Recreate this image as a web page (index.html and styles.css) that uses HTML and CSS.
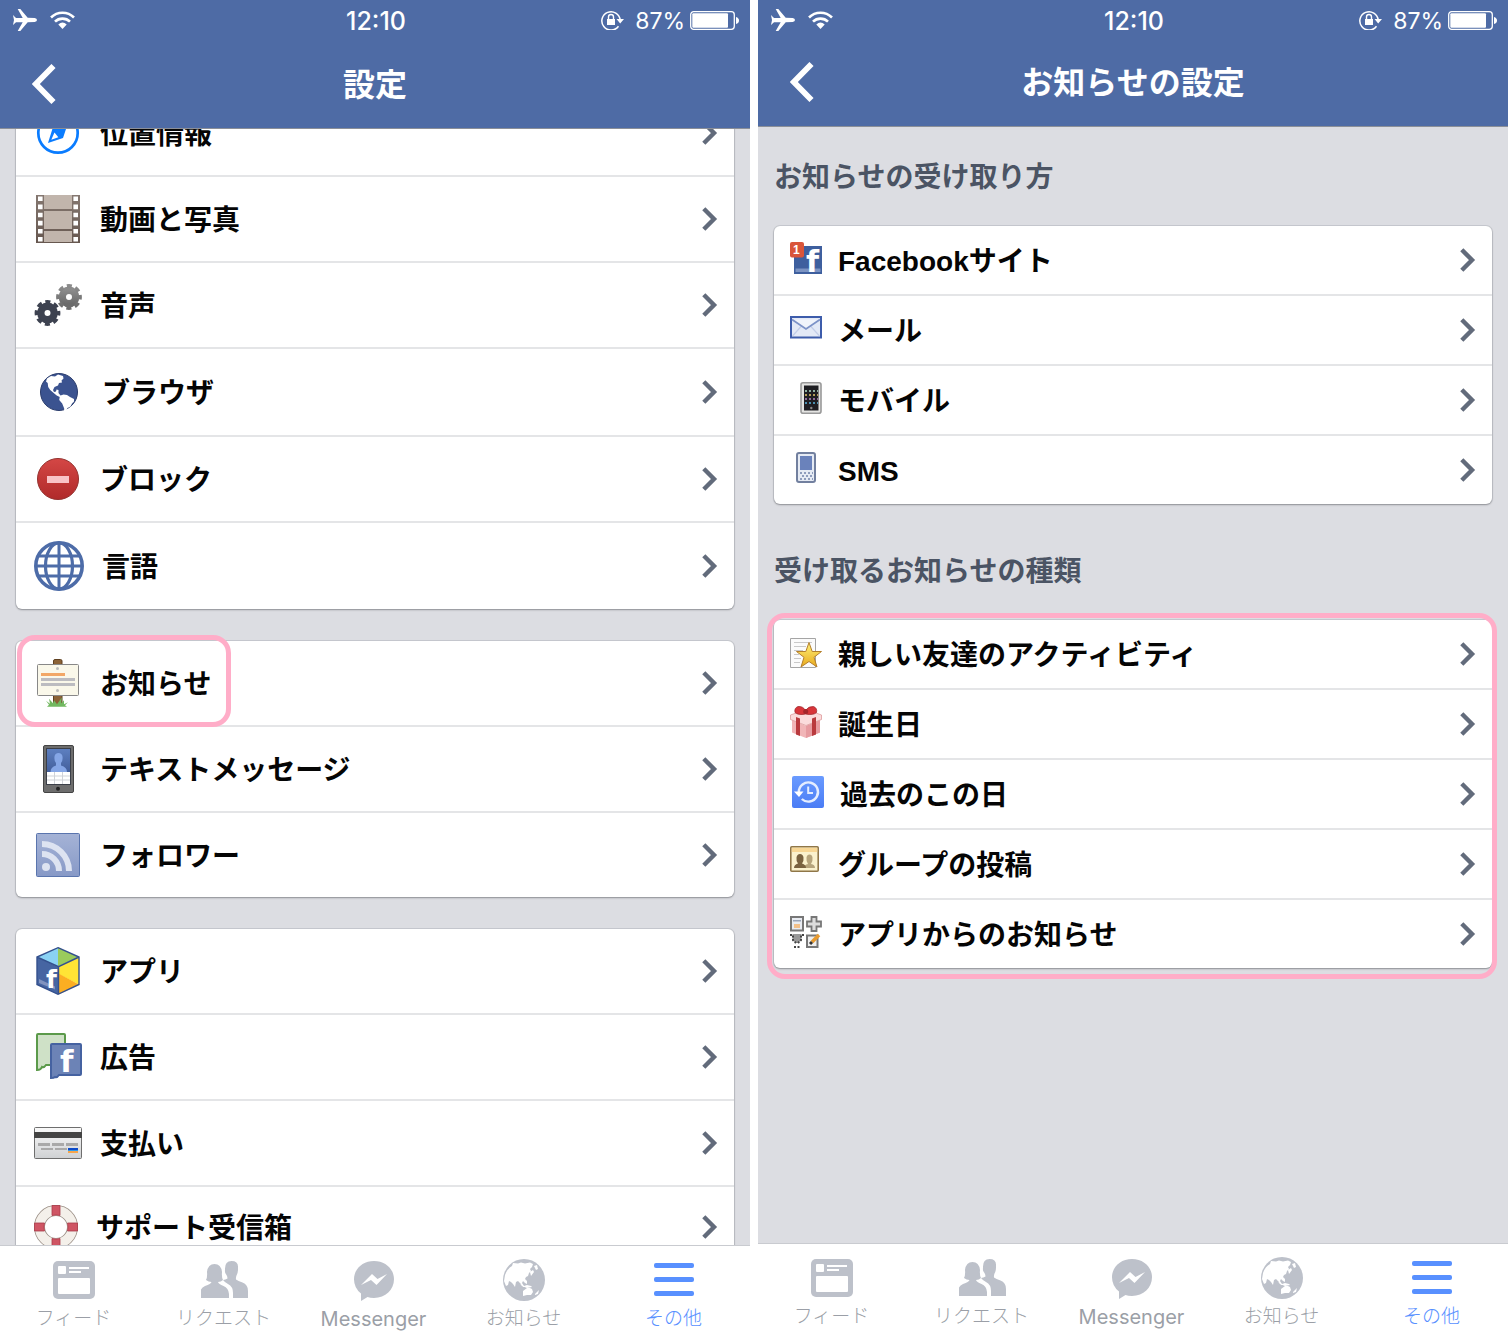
FILE: index.html
```html
<!DOCTYPE html>
<html lang="ja">
<head>
<meta charset="utf-8">
<title>お知らせの設定</title>
<meta name="viewport" content="width=device-width, initial-scale=1">
<link rel="stylesheet" href="styles.css">
</head>
<body>
<svg class="sprite" aria-hidden="true">
  <defs>
    <linearGradient id="g-film" x1="0" y1="0" x2="0" y2="1"><stop offset="0" stop-color="#857871"/><stop offset="1" stop-color="#66574f"/></linearGradient>
    <linearGradient id="g-gear" x1="0" y1="0" x2="0" y2="1"><stop offset="0" stop-color="#8b8b8b"/><stop offset="1" stop-color="#6b6b6b"/></linearGradient>
    <linearGradient id="g-red" x1="0" y1="0" x2="0" y2="1"><stop offset="0" stop-color="#d44745"/><stop offset="1" stop-color="#b02a2a"/></linearGradient>
    <linearGradient id="g-rss" x1="0" y1="0" x2="0" y2="1"><stop offset="0" stop-color="#a5b3d6"/><stop offset="1" stop-color="#8799c7"/></linearGradient>
    <linearGradient id="g-card" x1="0" y1="0" x2="0" y2="1"><stop offset="0" stop-color="#fafafa"/><stop offset="1" stop-color="#cfd1d3"/></linearGradient>
    <linearGradient id="g-sky" x1="0" y1="0" x2="0" y2="1"><stop offset="0" stop-color="#5d7fc0"/><stop offset="1" stop-color="#435f9b"/></linearGradient>
    <linearGradient id="g-star" x1="0" y1="0" x2="0" y2="1"><stop offset="0" stop-color="#fff27a"/><stop offset="1" stop-color="#e8a91c"/></linearGradient>
    <linearGradient id="g-day" x1="0" y1="0" x2="0" y2="1"><stop offset="0" stop-color="#6a9bff"/><stop offset="1" stop-color="#4a7cf5"/></linearGradient>
  </defs>

  <symbol id="plane" viewBox="0 0 24 22"><path fill="#fff" d="M0 6l3 3h6.700L4.700 0h2.600l7.400 8.700 7 .3Q24 9.400 24 11t-2.300 2l-7 .3L7.300 22H4.700l5-8.700H3L0 16l1-5z"/></symbol>
  <symbol id="wifi" viewBox="0 0 25 18"><g fill="none" stroke="#fff" stroke-width="2.600"><path d="M1 6.500a16.300 16.300 0 0 1 23 0"/><path d="M5 10.700a10.600 10.600 0 0 1 15 0"/></g><path fill="#fff" d="M12.500 18l-4.200-4.600q4.200-3.600 8.400 0z"/></symbol>
  <symbol id="lock" viewBox="0 0 24 20"><path fill="none" stroke="#fff" stroke-width="1.500" d="M18.500 16.300A9.200 9.200 0 1 1 20.200 10"/><path fill="#fff" d="M16.500 9H24l-3.800 4.600zM7 9h8v6H7z"/><path fill="none" stroke="#fff" stroke-width="1.400" d="M8.500 9V7a2.500 2.500 0 0 1 5 0v2"/></symbol>
  <symbol id="battery" viewBox="0 0 49 19"><rect x=".7" y=".7" width="43.600" height="17.600" rx="3" fill="none" stroke="#fff" stroke-width="1.300"/><rect x="2.300" y="2.300" width="35.700" height="14.400" rx="1" fill="#fff"/><path fill="#fff" d="M46 6q3 1 3 3.500T46 13z"/></symbol>
  <symbol id="back" viewBox="0 0 24 40"><path fill="none" stroke="#fff" stroke-width="5.800" d="M21.500 2L3.800 20l17.700 18"/></symbol>
  <symbol id="chev" viewBox="0 0 16 24"><path fill="none" stroke="#626b7b" stroke-width="4.400" d="M1.800 1.800L12 12 1.800 22.200"/></symbol>

  <symbol id="compass" viewBox="0 0 48 48"><circle cx="24" cy="24" r="19.700" fill="#fff" stroke="#0a7cff" stroke-width="2.700"/><path fill="#0a7cff" d="M14 34l5-16L34 14l-5 15z"/><path fill="#fff" d="M17.300 30.700l3.200-7.200 3.800 4.700z"/></symbol>
  <symbol id="film" viewBox="0 0 48 48"><path fill="url(#g-film)" d="M2 0h44v48H2z"/><path fill="#c1b5ac" d="M10 0h28v14H10zM10 16h28v18H10zM10 36h28v11H10z"/><path fill="none" stroke="#fff" stroke-width="4.600" stroke-dasharray="4.600 3.500" d="M6.300 1.500v46M41.700 1.500v46"/></symbol>
  <symbol id="gears" viewBox="0 0 48 48"><g fill="none" stroke="url(#g-gear)"><circle cx="35" cy="16" r="6.700" stroke-width="7.400"/><circle cx="35" cy="16" r="11" stroke-width="3.800" stroke-dasharray="5 3.640" stroke-dashoffset="2.500"/></g><g fill="none" stroke="#3d4250"><circle cx="13.500" cy="32" r="6.700" stroke-width="7.400"/><circle cx="13.500" cy="32" r="11" stroke-width="3.800" stroke-dasharray="5 3.640" stroke-dashoffset="2.500"/></g></symbol>
  <symbol id="globe" viewBox="0 0 50 48"><circle cx="25" cy="24" r="18.500" fill="#3b5390" stroke="#2a3c6c"/><path fill="#fff" d="M12 13.500l1-3 4-2.500 4 .5 3-2 5 1.500.5 2.500-2 2 .5 2-3 .5-1 2.500-3.500 1.500-1.500 3 1 2 2-.5.500-2 2 .5v3l2 2.500 3-1 3.500.5 3 2 4 2v2.500l-2 2-1.500 3-3 1.500-1.500 3-2 1.500.2-4-2-5-3-3.500.5-3-3-1.500-3-2.500-3.500-3-2-3-.5-4z"/></symbol>
  <symbol id="block" viewBox="0 0 48 48"><circle cx="24" cy="24" r="20.500" fill="url(#g-red)" stroke="#94322f"/><path fill="#f9c3c6" d="M13 21h22v7H13z"/></symbol>
  <symbol id="lang" viewBox="0 0 50 50"><g fill="none" stroke="#4d6ca8" stroke-width="3.200"><circle cx="25" cy="25" r="23.200" stroke-width="3.600"/><ellipse cx="25" cy="25" rx="13.500" ry="23"/><path d="M25 2v46M2 25h46M5 15h40M5 35h40" stroke-width="3"/></g></symbol>
  <symbol id="sign" viewBox="0 0 48 48"><path fill="#8b6237" stroke="#5f4020" d="M19.500 2q0-1.500 1.500-1.500h5.500q1.500 0 1.500 1.500v44h-8.500z"/><path fill="#72b860" d="M24 47.700H13l2-2-3-4 4 3-1-5 4 4.500 1-3 3 4 5-7-1 6 3-3v4l4-2-3 3 2 1.500z"/><rect x="3.500" y="5.500" width="41" height="31" rx="1" fill="#faf8ea" stroke="#888"/><path fill="#f2a766" d="M7 14h24v3H7z"/><path fill="#bcbcc0" d="M7 19h34v3H7zM7 24h34v3H7z"/><circle cx="23.500" cy="9.500" r="1.500" fill="#bbb"/><circle cx="23.500" cy="31.500" r="1.500" fill="#bbb"/></symbol>
  <symbol id="phone" viewBox="0 0 48 48"><rect x="9.500" y=".5" width="30" height="47" rx="1.500" fill="#6d6d6d" stroke="#444"/><path fill="#3b3f48" d="M12 3h25v37H12z"/><path fill="url(#g-sky)" d="M13 4h23v23H13z"/><path fill="#85a6e6" d="M16.500 27q0-5 5.500-6.500V18q-2-2-1.500-6.500Q21 8 24.500 8t4 3.500q.5 4.500-1.500 6.500v2.500q6 1.500 6 6.500z"/><path fill="#fff" d="M13 27h23v12H13z"/><path stroke="#d0d3d8" d="M13 31h23M13 35h23M20.500 27v12M28.500 27v12"/><circle cx="24" cy="43.700" r="2" fill="#222"/></symbol>
  <symbol id="rss" viewBox="0 0 48 48"><rect x="2.500" y="2.500" width="43" height="43" rx="1" fill="url(#g-rss)" stroke="#5a75ae"/><circle cx="12" cy="36" r="4" fill="#dde3f1"/><path fill="none" stroke="#dde3f1" stroke-width="6" d="M8 13a27 27 0 0 1 27 27M8 23a17 17 0 0 1 17 17"/></symbol>
  <symbol id="card" viewBox="0 0 48 48"><rect x=".5" y="8.500" width="47" height="31" rx="1" fill="url(#g-card)" stroke="#6e6e6e"/><path fill="#444" d="M0 13h48v6H0z"/><path fill="#a9a9a9" d="M4 24h12v3H4zM18 24h12v3H18zM32 24h12v3H32zM7 29h12v2H7zM21 29h12v2H21z"/><path fill="#0a49c8" d="M34 29h10v2H34z"/><path fill="#2f9cf0" d="M34 31h10v1H34z"/><path fill="#f7a54b" d="M34 32h10v2H34z"/></symbol>
  <symbol id="ring" viewBox="0 0 44 44"><circle cx="22" cy="22" r="16.500" fill="none" stroke="#9b8f86" stroke-width="11"/><circle cx="22" cy="22" r="16.500" fill="none" stroke="#f4f0ea" stroke-width="9.400"/><path fill="#cf5564" stroke="#a83b49" stroke-width=".8" d="M18 .5h8v10q-4-1-8 0zM18 33.500q4 1 8 0v10h-8zM.5 18h10q-1 4 0 8H.5zM33.500 18h10v8h-10q1-4 0-8z"/></symbol>

  <symbol id="mail" viewBox="0 0 32 36"><rect x="1" y="5" width="30" height="20.500" fill="#e3e9f6" stroke="#3d5cab" stroke-width="2"/><path fill="none" stroke="#c3cee8" stroke-width="1.200" d="M2.500 24l9-10M29.500 24l-9-10"/><path fill="#f1f4fb" stroke="#7d93c8" stroke-width="1.800" d="M2 7.500l14 9.500 14-9.500"/></symbol>
  <symbol id="mobile" viewBox="0 0 32 36"><rect x="11" y=".8" width="20" height="30.500" rx="2" fill="#e4e4e2" stroke="#999" stroke-width="1.600"/><path fill="#1e1e22" d="M14 3.500h14.500v25H14z"/><g stroke-width="2" stroke-dasharray="2 2"><path stroke="#8fb0a0" d="M15 9h13"/><path stroke="#b29b58" d="M15 13h13"/><path stroke="#8f6a9a" d="M15 17h13"/><path stroke="#4b8fae" d="M15 21h13"/></g><circle cx="21.300" cy="26" r="1.200" fill="#888"/></symbol>
  <symbol id="sms" viewBox="0 0 32 36"><rect x="7" y="1" width="18" height="29" rx="2" fill="#e6ebf4" stroke="#72809f" stroke-width="2"/><path fill="#6a82bb" d="M10 4h12v14H10z"/><path stroke="#8f9dbd" stroke-width="1.800" stroke-dasharray="2 2" d="M10 21h13M12 24h11M10 27h13"/></symbol>
  <symbol id="star" viewBox="0 0 32 36"><path fill="#fbfbfb" stroke="#a5a5a5" d="M.5 2.500h25v29H.5z"/><path stroke="#c9c9c9" d="M4 6.500h18M4 10.500h12M4 14.500h9M4 18.500h5M4 22.500h7M4 26.500h6"/><path fill="url(#g-star)" stroke="#b47f2c" stroke-linejoin="round" d="M19 6.500l3.200 9h9.300L24 21.300l3 9.700-8-5.500-8 5.500 3-9.700-7.500-5.800h9.300z"/></symbol>
  <symbol id="gift" viewBox="0 0 32 36"><path fill="#f1b5b7" d="M2 14l14 6 14-6v12.500L16 32 2 26.500z"/><path fill="#e79ba0" d="M16 20l14-6v12.500L16 32z"/><path fill="#fbdcdc" stroke="#dd9a9c" stroke-width=".8" d="M.5 9L16 3.500 31.500 9v4.500L16 19.500.5 13.500z"/><path fill="#b93a3e" d="M6 11l4 1.500V30l-4-1.500zM22 12.500l4-1.500v17.500L22 30z"/><path fill="#d8353a" stroke="#982025" stroke-width=".7" d="M15.500 8Q8 9.500 5 6.500 4 2 8 .5q5-.5 7.500 4 3-4.500 8-4 4 1.500 3 6-3 3-11 1.500z"/><circle cx="15.700" cy="5.500" r="2.500" fill="#a3262b"/></symbol>
  <symbol id="day" viewBox="0 0 34 36"><rect x="2" width="32" height="32" rx="2" fill="url(#g-day)"/><path fill="none" stroke="#e4edff" stroke-width="2.400" d="M8.800 16a9.600 9.600 0 1 1 3 7"/><path fill="none" stroke="#e4edff" stroke-width="2" d="M18.200 10.500V17H23"/><path fill="#fff" d="M4 15.500h9.500L9 21z"/></symbol>
  <symbol id="group" viewBox="0 0 32 36"><rect x=".8" y=".8" width="27.400" height="24.400" rx="1" fill="#fbf2cd" stroke="#8f7648" stroke-width="1.600"/><path fill="#f8d795" d="M1.800 1.800h25.400V6H1.800z"/><path fill="#b7a57c" d="M14 22q0-3.500 4-4-2-3-1.500-6.500.5-3 3-3t3 3Q23 15 21 18q4 .5 4 4z"/><path fill="#7a6340" d="M4 22q0-3.500 4-4.500-2-2-1.500-6 .5-3.500 3.500-3.500t3.500 3.500q.5 4-1.500 6 4 1 4 4.500z"/></symbol>
  <symbol id="apps" viewBox="0 0 32 36"><rect x="1" y="1" width="12" height="13.500" fill="#e9ecf2" stroke="#777" stroke-width="2"/><path fill="#9aa4b8" d="M3 4h8v1.500H3z"/><path fill="#f3c08a" d="M4 8h6v4H4z"/><path fill="#ddd" stroke="#777" stroke-width="1.800" d="M21.500 1h5v4.500H31v5h-4.500V15h-5v-4.500H17v-5h4.500z"/><path fill="#999" d="M2.500 18h9v5q-2 4-4.500 4t-4.500-4z"/><path fill="none" stroke="#444" stroke-width="2" stroke-dasharray="2 1.500" d="M0 19h3v5l3 3M14 19h-3v5l-3 3M4 31h7"/><rect x="17" y="19.500" width="10.500" height="11.500" fill="#eee" stroke="#777" stroke-width="2"/><path stroke="#e79a2f" stroke-width="3.600" d="M22 26l7-7"/><path stroke="#333" stroke-width="3" d="M20 28l2-2"/></symbol>

  <symbol id="t-feed" viewBox="0 0 48 44"><rect x="2" y="3" width="42" height="38" rx="5" fill="#bdc1ca"/><path fill="#fff" d="M18 9h20v2H18zM18 13h12v2H18z"/><rect x="7" y="8" width="8" height="8" rx="1" fill="#fff"/><rect x="7" y="20" width="32" height="16" rx="1" fill="#fff"/></symbol>
  <symbol id="t-req" viewBox="0 0 48 44"><g fill="#bdc1ca"><path d="M22 22q2.500-.3 4.500-1.500 0-2-1-3.500-2-2-1.500-5Q23.500 3 30.500 3T37 9.500q.3 5-1.500 8-.8 2-.5 4 2 1.700 6.500 3Q47 26.500 47 33v7H32v-5q0-6.500-5-9-3-1.500-5-4z"/><path d="M-1 40v-4q0-6 5-8 6-2 6.500-4-3 0-5.500-2Q6.500 19 6 14q1-8 7.500-8T21 14q-.5 5 1 8-2 2-5 2 .5 2 5.500 4t5.500 8v4z"/></g></symbol>
  <symbol id="t-msg" viewBox="0 0 48 44"><path fill="#bdc1ca" d="M23 3c11.500 0 20 8 20 18.300S34.500 40 23 40q-4 0-6.500-1L10 43v-7.500Q3 30 3 21.300C3 11 11.500 3 23 3z"/><path fill="#fff" d="M10 27l11-11 5.500 5L36 16 25.500 27 20 22z"/></symbol>
  <symbol id="t-globe" viewBox="0 0 48 44"><circle cx="23" cy="22" r="21" fill="#bdc1ca"/><path fill="#fff" d="M4 17q2-6 7-9l1-3 5 .5 3-1 4 1 5-1 3 1.500-1 3-2 2 1 2-2 2-1 3-2 1-1 2 2 2v3l-2-1-2-2-1 2 2 3-1 1-2-3-3-3-2 1-1 5-2-3-2-2-2-1-1 4-2 1-2-5zM33 8l3-1 1 4-2 1zM29 14l3-2 1 2-3 4zM19 26l4 2 3-1 4 1 1 1-5 1-5-2zM22 33l4-3 3 0 2 1 1 3-2 3-4 0-4 1zM34 36l4-4-1 4-3 1z"/></symbol>
  <symbol id="t-more" viewBox="0 0 48 44"><g fill="#5890ff"><rect x="3" y="5" width="40" height="5" rx="2"/><rect x="3" y="19" width="40" height="5" rx="2"/><rect x="3" y="33" width="40" height="5" rx="2"/></g></symbol>
</svg>

<div class="screens">
  <section class="phone phone--settings">
    <header class="top">
      <div class="status">
        <span class="status__side"><svg class="i-plane"><use href="#plane"/></svg><svg class="i-wifi"><use href="#wifi"/></svg></span>
        <span class="status__time">12:10</span>
        <span class="status__side status__side--end"><svg class="i-lock"><use href="#lock"/></svg><span class="status__pct">87%</span><svg class="i-battery"><use href="#battery"/></svg></span>
      </div>
      <div class="bar">
        <button class="bar__back" type="button" aria-label="戻る"><svg><use href="#back"/></svg></button>
        <h1 class="bar__title">設定</h1>
      </div>
    </header>
    <main class="content content--scrolled">
      <nav class="list">
        <a class="row" href="#"><svg class="row__icon"><use href="#compass"/></svg><span class="row__text">位置情報</span><svg class="row__chev"><use href="#chev"/></svg></a>
        <a class="row" href="#"><svg class="row__icon"><use href="#film"/></svg><span class="row__text">動画と写真</span><svg class="row__chev"><use href="#chev"/></svg></a>
        <a class="row" href="#"><svg class="row__icon"><use href="#gears"/></svg><span class="row__text">音声</span><svg class="row__chev"><use href="#chev"/></svg></a>
        <a class="row row--tall" href="#"><svg class="row__icon row__icon--wide"><use href="#globe"/></svg><span class="row__text">ブラウザ</span><svg class="row__chev"><use href="#chev"/></svg></a>
        <a class="row" href="#"><svg class="row__icon"><use href="#block"/></svg><span class="row__text">ブロック</span><svg class="row__chev"><use href="#chev"/></svg></a>
        <a class="row row--tall" href="#"><svg class="row__icon row__icon--wide row__icon--high"><use href="#lang"/></svg><span class="row__text">言語</span><svg class="row__chev"><use href="#chev"/></svg></a>
      </nav>
      <nav class="list">
        <a class="row row--marked" href="#"><svg class="row__icon"><use href="#sign"/></svg><span class="row__text">お知らせ</span><svg class="row__chev"><use href="#chev"/></svg></a>
        <a class="row" href="#"><svg class="row__icon"><use href="#phone"/></svg><span class="row__text">テキストメッセージ</span><svg class="row__chev"><use href="#chev"/></svg></a>
        <a class="row" href="#"><svg class="row__icon"><use href="#rss"/></svg><span class="row__text">フォロワー</span><svg class="row__chev"><use href="#chev"/></svg></a>
      </nav>
      <nav class="list">
        <a class="row" href="#">
          <svg class="row__icon" viewBox="0 0 48 48" aria-hidden="true"><path fill="#8ad2f4" d="M24 .5v19L3 10z"/><path fill="#9acb5c" d="M24 .5v19L45 10z"/><path fill="#4665a2" d="M3 10l21.500 10v27.500L3 37.500z"/><path fill="#ffe435" d="M24.500 20L45 10v27.500L24.500 27z"/><path fill="#fcae22" d="M24.500 26.500L45 37.500l-20.500 10z"/><path fill="#8193bf" d="M5 32l16 7.500v3L5 36z"/><path fill="none" stroke="#34508d" stroke-width="1.400" d="M24 .7L45 10v27.500L24 47.300 3 37.500V10zM3 10l21.500 9.700L45 10M24.500 20v27"/><text x="12" y="41" class="logo-f" font-size="25">f</text></svg>
          <span class="row__text">アプリ</span><svg class="row__chev"><use href="#chev"/></svg></a>
        <a class="row" href="#">
          <svg class="row__icon" viewBox="0 0 48 48" aria-hidden="true"><path fill="#cfe1c7" stroke="#5b9a4a" stroke-width="2" d="M4 1h26q1 0 1 1v30H12q-2 3-4 2-1 3-5 3V2q0-1 1-1z"/><path fill="#6c83b6" stroke="#4562a1" stroke-width="2" d="M18 11h28q1 0 1 1v29q0 1-1 1H25q-2 3-4 2-1 1-4 1V12q0-1 1-1z"/><text x="26" y="39" class="logo-f" font-size="31">f</text></svg>
          <span class="row__text">広告</span><svg class="row__chev"><use href="#chev"/></svg></a>
        <a class="row" href="#"><svg class="row__icon"><use href="#card"/></svg><span class="row__text">支払い</span><svg class="row__chev"><use href="#chev"/></svg></a>
        <a class="row row--short" href="#"><svg class="row__icon row__icon--small"><use href="#ring"/></svg><span class="row__text">サポート受信箱</span><svg class="row__chev"><use href="#chev"/></svg></a>
      </nav>
    </main>
    <nav class="tabs">
      <a class="tab" href="#"><svg><use href="#t-feed"/></svg><span>フィード</span></a>
      <a class="tab" href="#"><svg><use href="#t-req"/></svg><span>リクエスト</span></a>
      <a class="tab tab--latin" href="#"><svg><use href="#t-msg"/></svg><span>Messenger</span></a>
      <a class="tab" href="#"><svg><use href="#t-globe"/></svg><span>お知らせ</span></a>
      <a class="tab tab--on" href="#"><svg><use href="#t-more"/></svg><span>その他</span></a>
    </nav>
  </section>

  <section class="phone phone--notices">
    <header class="top">
      <div class="status">
        <span class="status__side"><svg class="i-plane"><use href="#plane"/></svg><svg class="i-wifi"><use href="#wifi"/></svg></span>
        <span class="status__time">12:10</span>
        <span class="status__side status__side--end"><svg class="i-lock"><use href="#lock"/></svg><span class="status__pct">87%</span><svg class="i-battery"><use href="#battery"/></svg></span>
      </div>
      <div class="bar">
        <button class="bar__back" type="button" aria-label="戻る"><svg><use href="#back"/></svg></button>
        <h1 class="bar__title">お知らせの設定</h1>
      </div>
    </header>
    <main class="content">
      <h2 class="heading">お知らせの受け取り方</h2>
      <nav class="list list--compact">
        <a class="row" href="#">
          <svg class="row__icon" viewBox="0 0 32 36" aria-hidden="true"><path fill="#3e5f9e" d="M4 4h28v28H4z"/><path fill="#7b93c2" d="M5.500 26.500h25V30h-25z"/><text x="16" y="30" class="logo-f" font-size="30">f</text><rect width="14" height="15.500" rx="2" fill="#d9553a"/><text x="3" y="12" class="badge-n" font-size="12">1</text></svg>
          <span class="row__text">Facebookサイト</span><svg class="row__chev"><use href="#chev"/></svg></a>
        <a class="row" href="#"><svg class="row__icon"><use href="#mail"/></svg><span class="row__text">メール</span><svg class="row__chev"><use href="#chev"/></svg></a>
        <a class="row" href="#"><svg class="row__icon"><use href="#mobile"/></svg><span class="row__text">モバイル</span><svg class="row__chev"><use href="#chev"/></svg></a>
        <a class="row" href="#"><svg class="row__icon"><use href="#sms"/></svg><span class="row__text">SMS</span><svg class="row__chev"><use href="#chev"/></svg></a>
      </nav>
      <h2 class="heading">受け取るお知らせの種類</h2>
      <nav class="list list--compact list--marked">
        <a class="row" href="#"><svg class="row__icon"><use href="#star"/></svg><span class="row__text">親しい友達のアクティビティ</span><svg class="row__chev"><use href="#chev"/></svg></a>
        <a class="row" href="#"><svg class="row__icon"><use href="#gift"/></svg><span class="row__text">誕生日</span><svg class="row__chev"><use href="#chev"/></svg></a>
        <a class="row" href="#"><svg class="row__icon row__icon--wide"><use href="#day"/></svg><span class="row__text">過去のこの日</span><svg class="row__chev"><use href="#chev"/></svg></a>
        <a class="row" href="#"><svg class="row__icon"><use href="#group"/></svg><span class="row__text">グループの投稿</span><svg class="row__chev"><use href="#chev"/></svg></a>
        <a class="row" href="#"><svg class="row__icon"><use href="#apps"/></svg><span class="row__text">アプリからのお知らせ</span><svg class="row__chev"><use href="#chev"/></svg></a>
      </nav>
    </main>
    <nav class="tabs">
      <a class="tab" href="#"><svg><use href="#t-feed"/></svg><span>フィード</span></a>
      <a class="tab" href="#"><svg><use href="#t-req"/></svg><span>リクエスト</span></a>
      <a class="tab tab--latin" href="#"><svg><use href="#t-msg"/></svg><span>Messenger</span></a>
      <a class="tab" href="#"><svg><use href="#t-globe"/></svg><span>お知らせ</span></a>
      <a class="tab tab--on" href="#"><svg><use href="#t-more"/></svg><span>その他</span></a>
    </nav>
  </section>
</div>
</body>
</html>
```
FILE: styles.css
```css
*,
*::after {
  box-sizing: border-box;
}

body {
  margin: 0;
  background: #fff;
  color: #050505;
  font-family: "Liberation Sans", "Noto Sans CJK JP", sans-serif;
}

a {
  color: inherit;
  text-decoration: none;
}

svg {
  display: block;
  flex: none;
}

.sprite {
  position: absolute;
  width: 0;
  height: 0;
}

.logo-f {
  fill: #fff;
  font-family: "DejaVu Sans", sans-serif;
  font-weight: 700;
}

.badge-n {
  fill: #fff;
  font-family: "Liberation Sans", sans-serif;
}

.screens {
  display: grid;
  grid-template-columns: 1fr 1fr;
  gap: 8px;
  height: 100vh;
}

.phone {
  display: flex;
  flex-direction: column;
  min-width: 0;
  min-height: 0;
  background: #dcdde2;
}

/* Header */
.top {
  background: #4e6ba5;
  border-bottom: 1px solid #8b8f98;
  color: #fff;
}

.status {
  display: grid;
  grid-template-columns: 1fr auto 1fr;
  align-items: center;
  height: 40px;
  padding: 0 11px 0 13px;
  font-family: Inter, sans-serif;
  font-size: 25px;
  line-height: 38px;
}

.phone--notices .status {
  height: 38px;
}

.status__side {
  display: flex;
  align-items: center;
  gap: 13px;
}

.status__side--end {
  justify-content: flex-end;
}

.status__time {
  padding-top: 2px;
  font-weight: 500;
}

.status__pct {
  margin: 0 -8px 0 -2px;
  padding-top: 2px;
  font-size: 23px;
  font-weight: 400;
}

.i-plane { width: 24px; height: 22px; }
.i-wifi { width: 25px; height: 18px; }
.i-lock { width: 24px; height: 20px; }
.i-battery { width: 49px; height: 19px; }

.bar {
  display: grid;
  grid-template-columns: 1fr auto 1fr;
  align-items: center;
  height: 88px;
  padding: 0 32px;
}

.bar__back {
  justify-self: start;
  padding: 0;
  border: 0;
  background: none;
}

.bar__back svg {
  width: 24px;
  height: 40px;
}

.bar__title {
  margin: 0;
  padding-top: 2px;
  font-size: 32px;
  line-height: 48px;
}

/* Lists */
.content {
  flex: 1 1 0;
  min-height: 0;
  padding: 0 16px;
  overflow: hidden;
}

.content--scrolled .list:first-child {
  margin-top: -38px;
}

.heading {
  margin: 48px 0 28px;
  color: #4b5464;
  font-size: 28px;
  line-height: 40px;
}

.heading:first-child {
  margin-top: 31px;
}

.list {
  position: relative;
  background: #fff;
  border-radius: 6px;
  box-shadow: 0 0 0 1px rgba(60, 65, 80, 0.12), 0 1px 2px rgba(0, 0, 0, 0.3);
}

.list + .list {
  margin-top: 32px;
}

.row {
  position: relative;
  display: flex;
  align-items: center;
  gap: 18px;
  min-height: 86px;
  padding: 0 16px 0 18px;
  border-bottom: 2px solid #e4e5e7;
  font-size: 28px;
  font-weight: 700;
  line-height: 40px;
}

.row--tall {
  min-height: 88px;
}

.row:last-child {
  min-height: 84px;
  border-bottom: 0;
}

.row--tall:last-child {
  min-height: 86px;
}

.row--short:last-child {
  min-height: 80px;
}

.row__icon {
  width: 48px;
  height: 48px;
  overflow: visible;
}

.row__icon--wide { width: 50px; }
.row__icon--high { height: 50px; }
.row__icon--small { width: 44px; height: 44px; }

.row__text {
  flex: 1;
  padding-top: 4px;
}

.row__chev {
  width: 16px;
  height: 24px;
}

.list--compact .row {
  gap: 16px;
  min-height: 70px;
  padding-left: 16px;
}

.list--compact .row:last-child {
  min-height: 68px;
}

.list--compact .row__icon {
  width: 32px;
  height: 36px;
}

.list--compact .row__icon--wide {
  width: 34px;
}

/* Pink outlines drawn over the lists */
.row--marked::after,
.list--marked::after {
  content: "";
  position: absolute;
  z-index: 1;
  border: 5px solid #ffadc8;
  border-radius: 18px;
  pointer-events: none;
}

.row--marked::after {
  top: -6px;
  left: 1px;
  width: 214px;
  height: 92px;
}

.list--marked::after {
  inset: -7px -5px -11px -7px;
}

/* Tab bar */
.tabs {
  display: grid;
  grid-template-columns: repeat(5, 1fr);
  padding: 12px 0 2px;
  border-top: 1px solid #c9cbd0;
  background: #fff;
}

.phone--notices .tabs {
  padding-bottom: 4px;
}

.tab {
  display: flex;
  flex-direction: column;
  align-items: center;
  gap: 4px;
  color: #9b9fa7;
  font-family: Inter, "Noto Sans CJK JP", sans-serif;
  font-size: 19px;
  font-weight: 300;
  line-height: 26px;
}

.tab span {
  padding-right: 3px;
}

.tab svg {
  width: 48px;
  height: 44px;
}

.tab--latin {
  font-size: 20px;
  font-weight: 400;
}

.tab--on {
  color: #5890ff;
}
```
